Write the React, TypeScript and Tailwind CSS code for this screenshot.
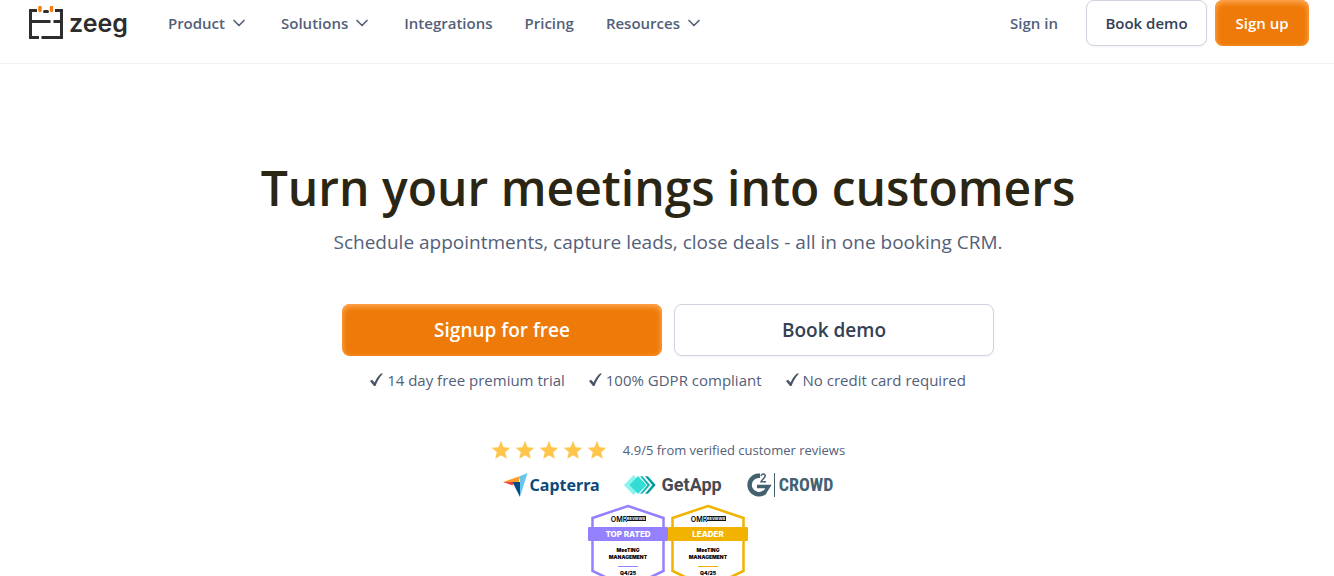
import React from 'react';
import { ChevronDown } from 'lucide-react';

const navItems = [
  { label: 'Product', menu: true },
  { label: 'Solutions', menu: true },
  { label: 'Integrations', menu: false },
  { label: 'Pricing', menu: false },
  { label: 'Resources', menu: true },
];

const perks = ['14 day free premium trial', '100% GDPR compliant', 'No credit card required'];

const orangeButton =
  'rounded-lg bg-[#ee7a09] font-semibold text-white shadow-[inset_0_2px_5px_1px_#ffa64f]';
const whiteButton =
  'rounded-lg border border-[#d0d3e0] bg-white font-semibold text-[#344054] shadow-xs';

const Logo: React.FC = () => (
  <a href="#" aria-label="zeeg" className="flex items-center gap-1.5 text-[#2d2d2d]">
    <svg width="34" height="34" viewBox="0 0 34 34" fill="none" stroke="#2d2d2d" strokeWidth="3">
      <path d="M8 4.500H1.500V31.500H10" />
      <path d="M2 15.500H21.500" />
      <path d="M26 4.500H32.500V31.500H12.500" />
      <path d="M24.500 15.500H32" />
      <path d="M15.500 5.500H18.500" strokeLinecap="round" />
      <path d="M11 1.500V4.500" stroke="#f57f0a" strokeWidth="3.500" strokeLinecap="round" />
      <path d="M22.500 1.500V4.500" stroke="#f57f0a" strokeWidth="3.500" strokeLinecap="round" />
    </svg>
    <span className="font-[Inter,sans-serif] text-[25px] leading-8 font-semibold">zeeg</span>
  </a>
);

const Header: React.FC = () => (
  <header className="flex h-16 items-start justify-between border-b border-[#f0f0f2] pr-[25px] pl-[29px]">
    <div className="flex h-[46px] items-center gap-10">
      <Logo />
      <nav className="flex items-center gap-8 text-[15px] font-semibold text-[#536079]">
        {navItems.map((item) =>
          item.menu ? (
            <button key={item.label} type="button" className="flex items-center gap-1">
              {item.label}
              <ChevronDown size={20} strokeWidth={2} />
            </button>
          ) : (
            <a key={item.label} href="#">
              {item.label}
            </a>
          )
        )}
      </nav>
    </div>
    <div className="flex h-[46px] items-stretch gap-2 text-[15px]">
      <a href="#" className="mr-5 flex items-center font-semibold text-[#536079]">
        Sign in
      </a>
      <button type="button" className={`w-[121px] ${whiteButton}`}>
        Book demo
      </button>
      <button type="button" className={`w-[94px] ${orangeButton}`}>
        Sign up
      </button>
    </div>
  </header>
);

const Star: React.FC = () => (
  <svg width="20" height="20" viewBox="0 0 20 20" fill="#ffc64b">
    <path d="M10 1l2.600 6.200 6.700.600-5.100 4.400 1.600 6.600L10 15.200l-5.800 3.600 1.600-6.600L.700 7.800l6.700-.600z" />
  </svg>
);

const Capterra: React.FC = () => (
  <div className="flex items-center gap-0.5 text-[#0c4a7c]">
    <svg width="25" height="24" viewBox="0 0 25 24">
      <path d="M0 9l16-5.500V9z" fill="#ff9d28" />
      <path d="M16 3.500L24.500 0 17 24V9z" fill="#68c5ed" />
      <path d="M0 9h11l-1.500 3.500z" fill="#e54747" />
      <path d="M9.500 9h7.500v15z" fill="#044d80" />
    </svg>
    <span className="font-['Noto_Sans',sans-serif] text-[16px] leading-6 font-bold">Capterra</span>
  </div>
);

const GetApp: React.FC = () => (
  <div className="flex items-center gap-1.5 text-[#444b52]">
    <svg width="32" height="20" viewBox="0 0 32 20">
      <path d="M9.500 0l9.500 10-9.500 10L0 10z" fill="#8cf3ef" />
      <path d="M14 1l8.500 9-8.500 9-8.500-9z" fill="#33dcd5" />
      <path d="M15.500 1H18.500l8 9-8 9h-3l7.500-9z" fill="#14b5b1" stroke="#fff" strokeWidth=".6" />
      <path d="M20.500 1h3.500l8 9-8 9h-3.500l7.500-9z" fill="#009a9c" stroke="#fff" strokeWidth=".6" />
    </svg>
    <span className="font-[Roboto,sans-serif] text-[18px] leading-6 font-bold">GetApp</span>
  </div>
);

const G2Crowd: React.FC = () => (
  <div className="flex items-center gap-1 text-[#43616f]">
    <svg width="29" height="24" viewBox="0 0 29 24" fill="none" stroke="#43616f">
      <path d="M14 2.700H12A9.300 9.300 0 1 0 19 19" strokeWidth="4.500" />
      <path d="M11 13.500h11.500l-4.500 7" strokeWidth="3.500" />
      <path d="M15 3c.600-2.800 4.600-2.500 4.200.200-.200 1.800-3 3-4.200 5.600h5" strokeWidth="1.500" />
      <path d="M28.500 0V24" />
    </svg>
    <span className="font-['Roboto_Condensed',Roboto,sans-serif] text-[18px] leading-6 font-bold">
      CROWD
    </span>
  </div>
);

type BadgeProps = { title: string; color: string };

const Badge: React.FC<BadgeProps> = ({ title, color }) => (
  <svg width="80" height="88" viewBox="0 0 80 88" fontFamily="Inter, sans-serif" textAnchor="middle">
    <path d="M40 2L75.500 14V67L40 84 4.500 67V14z" fill="#fff" stroke={color} strokeWidth="2.500" />
    <rect x="0" y="23" width="80" height="14" rx="1" fill={color} />
    <text x="31" y="18" fontSize="7" fontWeight="600">
      OMR
    </text>
    <rect x="39" y="12" width="19" height="5" fill="#111" />
    <text x="48" y="16" fontSize="4" fontWeight="700" fill="#fff">
      REVIEWS
    </text>
    <text x="40" y="33" fontSize="8" fontWeight="800" fill="#fff">
      {title}
    </text>
    <text x="40" y="48" fontSize="5" fontWeight="900">
      MeeTING
    </text>
    <text x="40" y="55" fontSize="5" fontWeight="900">
      MANAGEMENT
    </text>
    <path d="M30 62.500H50" stroke={color} />
    <text x="40" y="71" fontSize="5" fontWeight="900">
      Q4/25
    </text>
  </svg>
);

const Hero: React.FC = () => (
  <main className="flex flex-col items-center pt-[92px] pl-0.5 text-[#536079]">
    <h1 className="text-center text-5xl leading-16 font-semibold text-[#2a2613]">
      Turn your meetings into customers
    </h1>
    <p className="mt-2 text-center text-[19px] leading-7">
      Schedule appointments, capture leads, close deals - all in one booking CRM.
    </p>

    <div className="mt-12 grid w-full max-w-[652px] grid-cols-2 gap-3 text-[19px]">
      <button type="button" className={`h-[52px] ${orangeButton}`}>
        Signup for free
      </button>
      <button type="button" className={`h-[52px] ${whiteButton}`}>
        Book demo
      </button>
    </div>
    <ul className="mt-3 flex gap-6 text-[15px] leading-6">
      {perks.map((perk) => (
        <li key={perk} className="flex items-center gap-1">
          <svg width="13" height="14" viewBox="0 0 13 14" fill="#475467">
            <path d="M0 8l2-1.200 2.600 2.700C6.300 5.500 8.500 2.500 11 .500h2C9.700 4 7.300 8 5.500 13H4z" />
          </svg>
          {perk}
        </li>
      ))}
    </ul>

    {/* Reviews */}
    <div className="mt-12 flex items-center gap-4">
      <div className="flex gap-1">
        {[1, 2, 3, 4, 5].map((n) => (
          <Star key={n} />
        ))}
      </div>
      <span className="text-[13px] leading-5">4.9/5 from verified customer reviews</span>
    </div>
    <div className="mt-3 flex h-[26px] items-center gap-6">
      <Capterra />
      <GetApp />
      <G2Crowd />
    </div>
    <div className="mt-1.5 flex">
      <Badge title="TOP RATED" color="#9381ff" />
      <Badge title="LEADER" color="#f2b200" />
    </div>
  </main>
);

const App: React.FC = () => (
  <div className="bg-white font-['Open_Sans','Noto_Sans',sans-serif]">
    <Header />
    <Hero />
  </div>
);

export default App;
